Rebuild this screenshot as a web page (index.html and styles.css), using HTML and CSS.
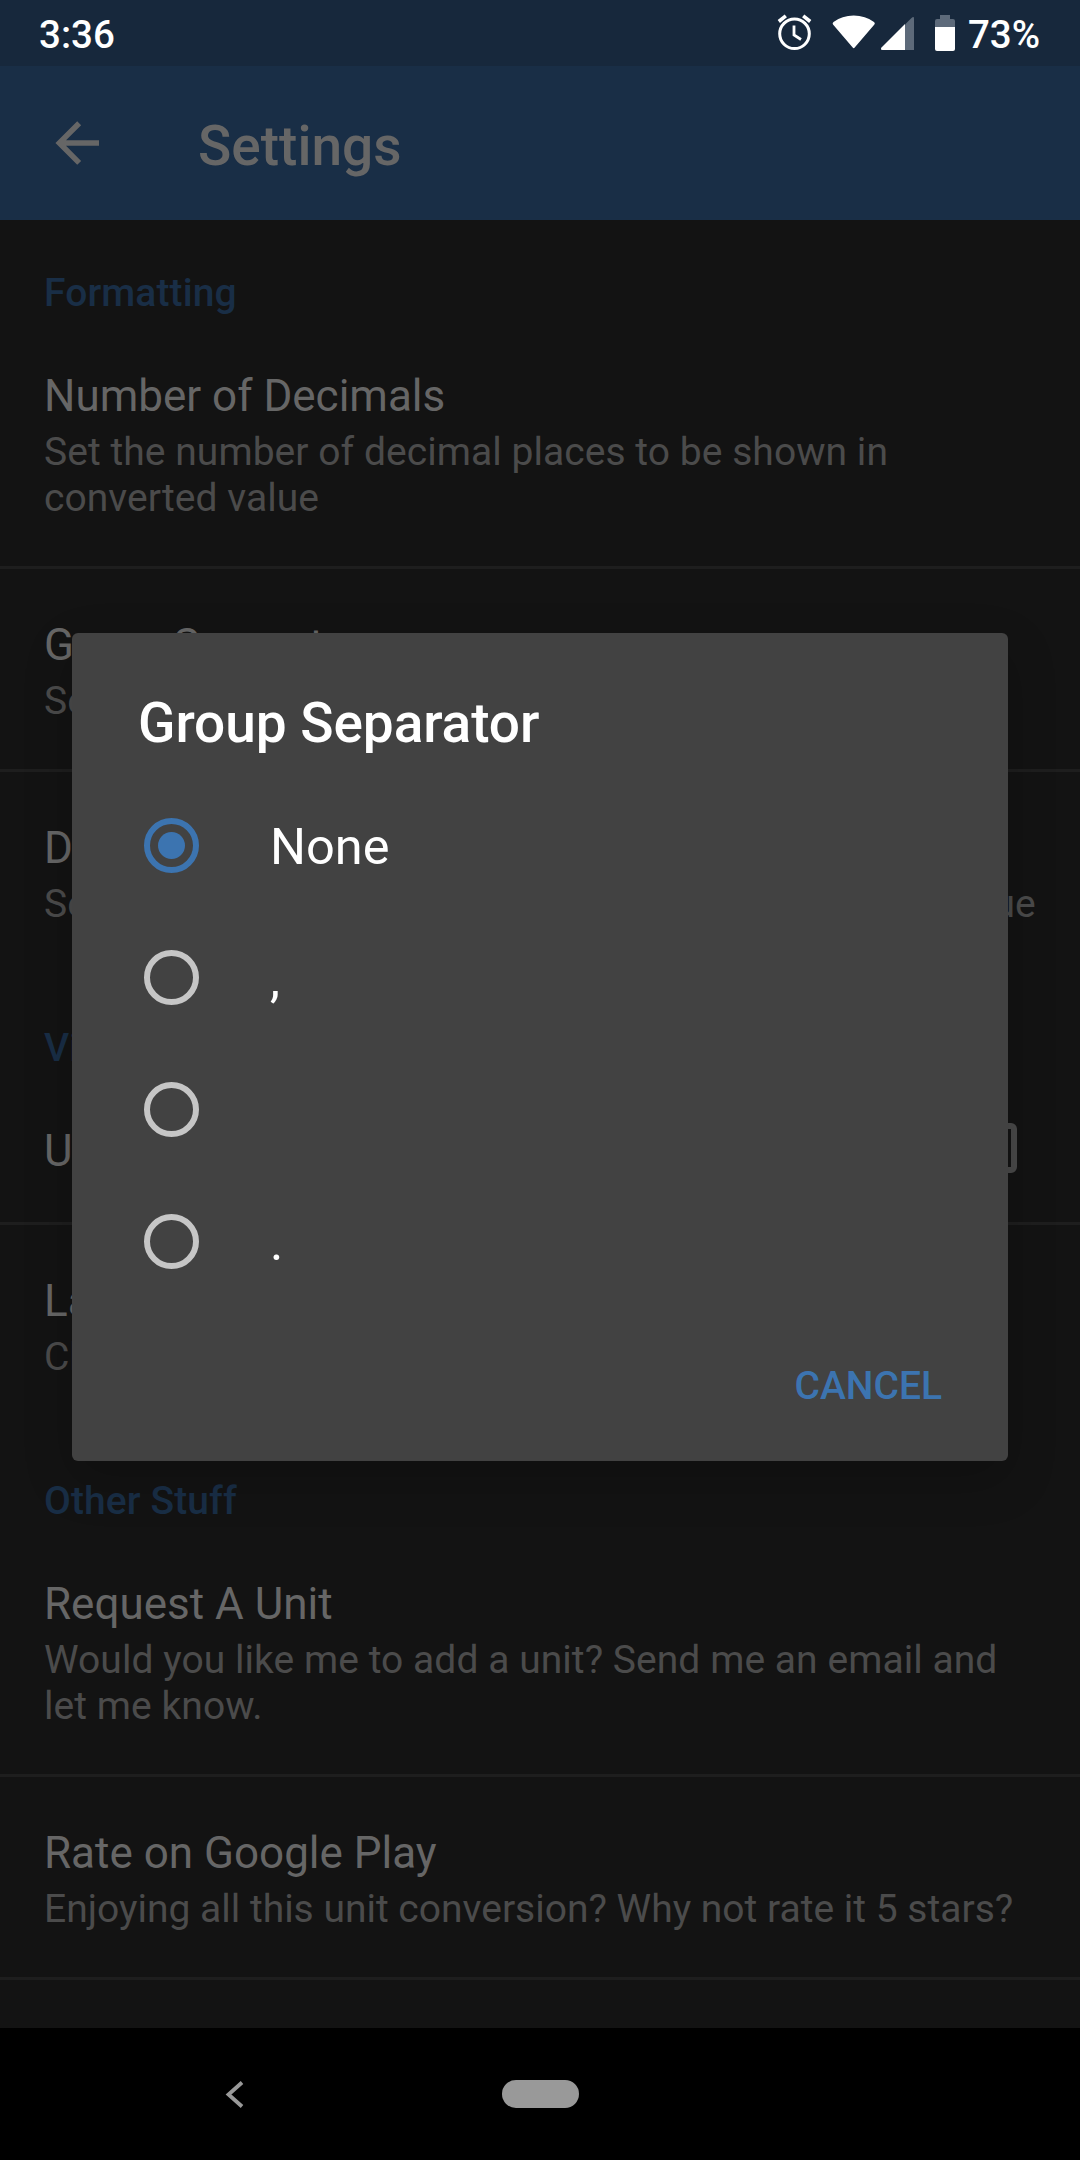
FILE: index.html
```html
<!DOCTYPE html>
<html lang="en">
<head>
<meta charset="utf-8">
<title>Settings</title>
<link rel="stylesheet" href="styles.css">
</head>
<body>
<div class="screen">
  <header class="status-bar">
    <span class="clock">3:36</span>
    <svg class="status-icons" width="182" height="40" viewBox="776 13 182 40">
      <g fill="none" stroke="#fff">
        <circle cx="794.5" cy="33.800" r="14.800" stroke-width="3"/>
        <path d="M794 25.500v9.500l7 4.500" stroke-width="2.800"/>
        <path d="M778.800 21.500l7-5.700M810.200 21.500l-7-5.700" stroke-width="3.600"/>
      </g>
      <path d="M833 24.500Q832 23 833.500 22Q842 15.500 853.700 15.500T874 22Q875.500 23 874.400 24.500L854.700 47.600Q853.700 48.700 852.700 47.600Z" fill="#fff"/>
      <path d="M905 24.500L911.500 18Q914 16 914 18.500V50H905Z" fill="#5d6a7a"/>
      <path d="M905 24V50H882.500Q880 50 881.500 47.500Z" fill="#fff"/>
      <path d="M935 27V21Q935 19 937 19H940V15H950V19H953Q955 19 955 21V27Z" fill="#5d6a7a"/>
      <path d="M935 27H955V49Q955 51 953 51H937Q935 51 935 49Z" fill="#fff"/>
    </svg>
    <span class="battery-level">73%</span>
  </header>
  <div class="app-bar">
    <svg class="back" width="66" height="66" viewBox="0 0 24 24"><path fill="#666" d="M20 11V13H8L13.500 18.500L12.080 19.920L4.160 12L12.080 4.080L13.500 5.500L8 11H20Z"/></svg>
    <h1 class="title">Settings</h1>
  </div>
  <main class="preferences">
    <section class="group">
      <h2 class="category">Formatting</h2>
      <div class="pref"><div class="pref-title">Number of Decimals</div><div class="summary">Set the number of decimal places to be shown in converted value</div></div>
      <div class="pref"><div class="pref-title">Group Separator</div><div class="summary">Set the group separator</div></div>
      <div class="pref"><div class="pref-title">Decimal Separator</div><div class="summary fit">Set the decimal separator to be shown in converted value</div></div>
    </section>
    <section class="group">
      <h2 class="category">View</h2>
      <div class="pref with-check"><div class="pref-title">Use Dark Theme</div><span class="checkbox"></span></div>
      <div class="pref"><div class="pref-title">Language</div><div class="summary">Change the language</div></div>
    </section>
    <section class="group">
      <h2 class="category">Other Stuff</h2>
      <div class="pref"><div class="pref-title">Request A Unit</div><div class="summary">Would you like me to add a unit? Send me an email and let me know.</div></div>
      <div class="pref ruled"><div class="pref-title">Rate on Google Play</div><div class="summary">Enjoying all this unit conversion? Why not rate it 5 stars?</div></div>
    </section>
  </main>
  <nav class="nav-bar">
    <svg class="nav-back" width="22" height="32" viewBox="224 2078 22 32"><path d="M242 2082.500L228.500 2094.500L242 2106.500" fill="none" stroke="#999" stroke-width="3.800"/></svg>
    <span class="home-pill"></span>
  </nav>
  <div class="dialog" role="dialog">
    <h2 class="dialog-title">Group Separator</h2>
    <div class="options">
      <div class="option"><span class="radio checked"></span><span class="label">None</span></div>
      <div class="option"><span class="radio"></span><span class="label">,</span></div>
      <div class="option"><span class="radio"></span><span class="label"></span></div>
      <div class="option"><span class="radio"></span><span class="label">.</span></div>
    </div>
    <div class="actions"><span class="cancel">CANCEL</span></div>
  </div>
</div>
</body>
</html>
```

FILE: styles.css
```css
* { box-sizing: border-box; }
body { margin: 0; background: #131313; font-family: Roboto, "Liberation Sans", sans-serif; }
h1, h2 { margin: 0; }

.screen {
  position: relative;
  display: flex;
  flex-direction: column;
  width: 1080px;
  height: 2160px;
  overflow: hidden;
}

.status-bar {
  display: flex;
  align-items: flex-start;
  flex: none;
  height: 66px;
  padding: 0 40px 0 39px;
  background: #17283c;
  color: #fff;
  font-size: 38.5px;
  font-weight: 500;
  line-height: 70px;
}
.status-icons { margin: 13px 10px 0 auto; }

.app-bar {
  display: flex;
  align-items: center;
  flex: none;
  height: 154px;
  padding-left: 44px;
  gap: 88px;
  background: #192e46;
}
.title {
  color: #666;
  font-size: 55px;
  font-weight: 500;
  line-height: 64px;
  padding-top: 5px;
}

.preferences { flex: 1; min-height: 0; overflow: hidden; }
.category {
  height: 100px;
  padding: 51px 44px 0;
  color: #192e46;
  font-size: 39px;
  font-weight: 500;
  line-height: 45px;
  letter-spacing: .1px;
}
.pref {
  padding: 50px 44px 45px;
  border-bottom: 3px solid #1e1e1e;
}
.pref:last-child { border-bottom-color: transparent; }
.pref.ruled { border-bottom-color: #1e1e1e; }
.pref-title { color: #666; font-size: 44px; line-height: 52px; }
.summary { margin-top: 7px; color: #4b4b4b; font-size: 39px; line-height: 46px; letter-spacing: .05px; }
.ruled .summary { letter-spacing: 0; }
.fit { white-space: nowrap; }
.with-check {
  display: flex;
  align-items: flex-start;
  justify-content: space-between;
  height: 150px;
  padding-bottom: 0;
}
.checkbox {
  width: 50px;
  height: 50px;
  margin: -2px 19px 0 0;
  border: 6px solid #4a4a4a;
  border-radius: 6px;
}

.nav-bar {
  display: flex;
  align-items: center;
  flex: none;
  height: 132px;
  padding-left: 224px;
  gap: 256px;
  background: #000;
}
.home-pill { width: 77px; height: 28px; border-radius: 14px; background: #999; }

.dialog {
  position: absolute;
  left: 72px;
  top: 633px;
  width: 936px;
  height: 828px;
  border-radius: 6px;
  background: #424242;
  box-shadow: 0 18px 50px rgba(0, 0, 0, .2);
}
.dialog-title {
  height: 146px;
  padding: 58px 66px 0;
  color: #fff;
  font-size: 55px;
  font-weight: 500;
  line-height: 64px;
  letter-spacing: -.07px;
}
.option {
  display: flex;
  align-items: center;
  height: 132px;
  padding-left: 71.5px;
  gap: 71.5px;
}
.radio {
  display: grid;
  place-items: center;
  width: 55px;
  height: 55px;
  border: 6px solid #c6c6c6;
  border-radius: 50%;
}
.radio.checked { border-color: #3c74b0; }
.radio.checked::after {
  content: "";
  width: 27px;
  height: 27px;
  border-radius: 50%;
  background: #3c74b0;
}
.label { padding-top: 3px; color: #fff; font-size: 50.5px; line-height: 58px; }
.actions {
  display: flex;
  justify-content: flex-end;
  padding: 57px 66px 0 0;
  color: #3c74b0;
  font-size: 39px;
  font-weight: 500;
  line-height: 45px;
}
```
